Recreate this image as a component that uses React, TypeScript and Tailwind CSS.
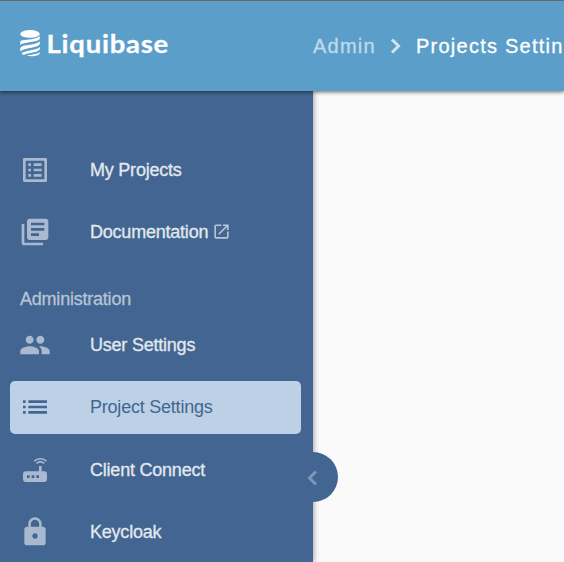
import type { ReactNode } from "react";
import {
  MdLibraryBooks,
  MdList,
  MdListAlt,
  MdLock,
  MdOpenInNew,
  MdPeople,
  MdRouter,
} from "react-icons/md";

function Logo() {
  return (
    <svg width="150" height="36" viewBox="0 0 150 36" fill="#fff" role="img" aria-label="Liquibase">
      <ellipse cx="10" cy="4.9" rx="9.8" ry="3.9" />
      <path d="M0.2 15.8V13.5C0.2 11.6 2 11.2 5 11C11 10.5 17 9.5 19.9 7.3V9.3C19.5 13.4 6 12.6 0.2 15.8Z" />
      <path d="M0.2 22.2V20.2C0.2 17.4 4 16.8 8 16.1C13 15.3 17.5 14.4 19.9 12.4V14.8C18.5 19.4 5.5 18.3 0.2 22.2Z" />
      <path d="M1.4 24.3C6 20.9 16.5 21.8 19.9 18V20C18 24.2 8 23.2 3.9 26C2.7 25.6 2 25 1.4 24.3Z" />
      <path d="M6.8 26.8C10.5 25.2 17 25.6 19.9 23.2V24C19.2 27 12 27.8 6.8 26.8Z" />
      <text
        x="26.6"
        y="24"
        textLength="122.4"
        lengthAdjust="spacingAndGlyphs"
        className="font-['Lato',sans-serif] text-[25px] font-bold tracking-[0.7px]"
        stroke="#fff"
        strokeWidth="0.3"
      >
        Liquibase
      </text>
    </svg>
  );
}

function Chevron({ points, className }: { points: string; className: string }) {
  return (
    <svg
      width="28"
      height="28"
      viewBox="0 0 28 28"
      fill="none"
      stroke="currentColor"
      strokeWidth="3"
      className={className}
    >
      <polyline points={points} />
    </svg>
  );
}

function NavItem({ icon, label, active = false }: { icon: ReactNode; label: ReactNode; active?: boolean }) {
  return (
    <a
      className={
        active
          ? "flex h-[53px] items-center rounded-[5px] bg-[#bcd1e5] pl-[9px] text-[#426691]"
          : "flex h-[53px] items-center rounded-[5px] pl-[9px] text-[#e3e8ef] [-webkit-text-stroke:0.3px_#e3e8ef]"
      }
    >
      <span className={active ? "w-[71px] text-[#426691]" : "w-[71px] text-[#a9b9cf]"}>{icon}</span>
      <span className="flex items-center">{label}</span>
    </a>
  );
}

export default function App() {
  return (
    <div className="flex h-[562px] w-[564px] flex-col overflow-hidden bg-[#fafafa] font-['Liberation_Sans',Arial,sans-serif]">
      <header className="relative z-10 flex h-[91px] shrink-0 border-t border-[#68696c] bg-[#5b9ec9] shadow-[0_1px_4px_rgba(0,0,0,0.6)]">
        <div className="w-[313px] shrink-0 pt-[28px] pl-[20px]">
          <Logo />
        </div>
        <nav className="flex h-[90px] items-center text-xl tracking-[1.25px] whitespace-nowrap">
          <span className="text-[#bfdaeb] [-webkit-text-stroke:0.3px_#bfdaeb]">Admin</span>
          <Chevron points="10,7.5 16.5,14 10,20.5" className="mr-[6px] ml-[6px] shrink-0 text-[#d0e4f0]" />
          <span className="text-white [-webkit-text-stroke:0.3px_#fff]">Projects Settings</span>
        </nav>
      </header>
      <div className="flex min-h-0 flex-1">
        <aside className="relative w-[313px] bg-[#426691] pt-[52px] pr-3 pl-[10px] text-lg tracking-[-0.22px] shadow-[1px_0_5px_rgba(0,0,0,0.35)]">
          <div className="flex flex-col gap-[9px]">
            <NavItem icon={<MdListAlt size={32} />} label="My Projects" />
            <NavItem
              icon={<MdLibraryBooks size={32} />}
              label={
                <>
                  Documentation
                  <MdOpenInNew size={19} className="ml-[4px] text-[#bac7d8]" />
                </>
              }
            />
          </div>
          <h2 className="mt-[28px] mb-[5px] pl-[10px] leading-[27px] text-[#b7c4d6] [-webkit-text-stroke:0.3px_#b7c4d6]">
            Administration
          </h2>
          <div className="flex flex-col gap-[9.5px]">
            <NavItem icon={<MdPeople size={32} />} label="User Settings" />
            <NavItem icon={<MdList size={32} />} label="Project Settings" active />
            <NavItem icon={<MdRouter size={32} />} label="Client Connect" />
            <NavItem icon={<MdLock size={32} />} label="Keycloak" />
          </div>
          <button
            aria-label="Collapse sidebar"
            className="absolute top-[361px] -right-[25px] flex h-[50px] w-[50px] items-center rounded-full bg-[#426691] pl-[11px] text-[#8096b6]"
          >
            <Chevron points="17,7.5 10.5,14 17,20.5" className="mt-[2px]" />
          </button>
        </aside>
        <main className="flex-1" />
      </div>
    </div>
  );
}
